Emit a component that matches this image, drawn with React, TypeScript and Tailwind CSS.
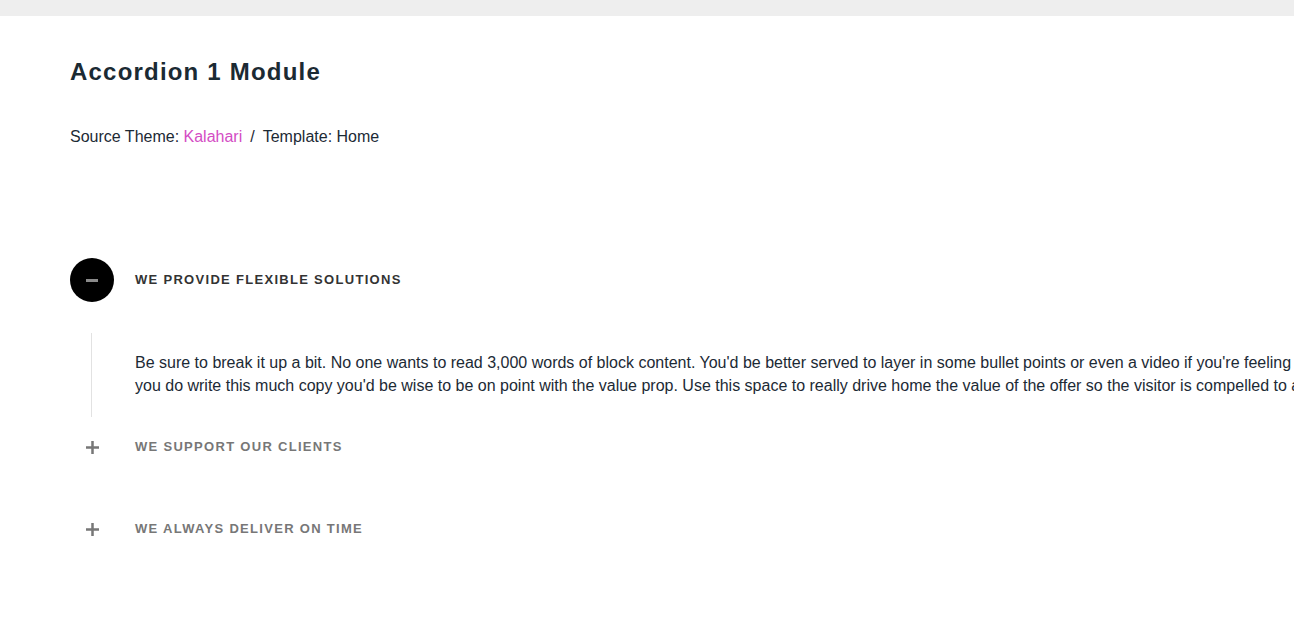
import React, { useState } from 'react';

const items = [
  {
    title: 'We provide flexible solutions',
    lines: [
      "Be sure to break it up a bit. No one wants to read 3,000 words of block content. You'd be better served to layer in some bullet points or even a video if you're feeling frisky. If",
      "you do write this much copy you'd be wise to be on point with the value prop. Use this space to really drive home the value of the offer so the visitor is compelled to act.",
    ],
  },
  { title: 'We support our clients', lines: ['Lorem ipsum dolor sit amet.'] },
  { title: 'We always deliver on time', lines: ['Lorem ipsum dolor sit amet.'] },
];

export default function App() {
  const [open, setOpen] = useState(0);

  return (
    <div className="min-h-[619px] w-full overflow-hidden bg-white font-['Liberation_Sans',Arial,sans-serif] text-[#1c2a35]">
      <div className="h-4 w-full bg-[#eeeeee]" />

      <div className="pl-[70px]">
        <h1 className="pt-[40px] text-[24px] font-bold leading-[32px] tracking-[1.2px] text-[#1b2a33]">
          Accordion 1 Module
        </h1>
        <p className="mt-[37px] text-[16px] leading-[24px]">
          Source Theme: <span className="text-[#d44cc4]">Kalahari</span>
          <span className="mx-[8px]">/</span>Template: Home
        </p>

        {/* accordion */}
        <div className="mt-[109px]">
          {items.map((item, i) => {
            const isOpen = open === i;
            return (
              <div key={item.title}>
                <button
                  onClick={() => setOpen(isOpen ? -1 : i)}
                  className="flex h-[44px] items-center gap-[21px] text-left"
                >
                  <span
                    className={
                      isOpen
                        ? 'flex h-[44px] w-[44px] items-center justify-center rounded-full bg-black'
                        : 'flex h-[44px] w-[44px] items-center justify-center'
                    }
                  >
                    {isOpen ? (
                      <span className="block h-[3px] w-[12px] bg-[#8a8a8a]" />
                    ) : (
                      <svg width="13" height="13" viewBox="0 0 13 13">
                        <rect x="5.25" y="0" width="2.5" height="13" fill="#777777" />
                        <rect x="0" y="5.25" width="13" height="2.5" fill="#777777" />
                      </svg>
                    )}
                  </span>
                  <span
                    className={
                      isOpen
                        ? 'text-[13px] font-bold uppercase tracking-[1.3px] text-[#333333]'
                        : 'text-[13px] font-bold uppercase tracking-[1.3px] text-[#777777]'
                    }
                  >
                    {item.title}
                  </span>
                </button>

                {isOpen ? (
                  <div className="mb-[8px] ml-[21px] mt-[31px] border-l border-[#e2e2e2] pb-[20px] pl-[43px] pt-[18px]">
                    {item.lines.map((l) => (
                      <p key={l} className="whitespace-nowrap text-[16px] leading-[23px] text-[#1c2a35]">
                        {l}
                      </p>
                    ))}
                  </div>
                ) : (
                  <div className="h-[38px]" />
                )}
              </div>
            );
          })}
        </div>
      </div>
    </div>
  );
}
